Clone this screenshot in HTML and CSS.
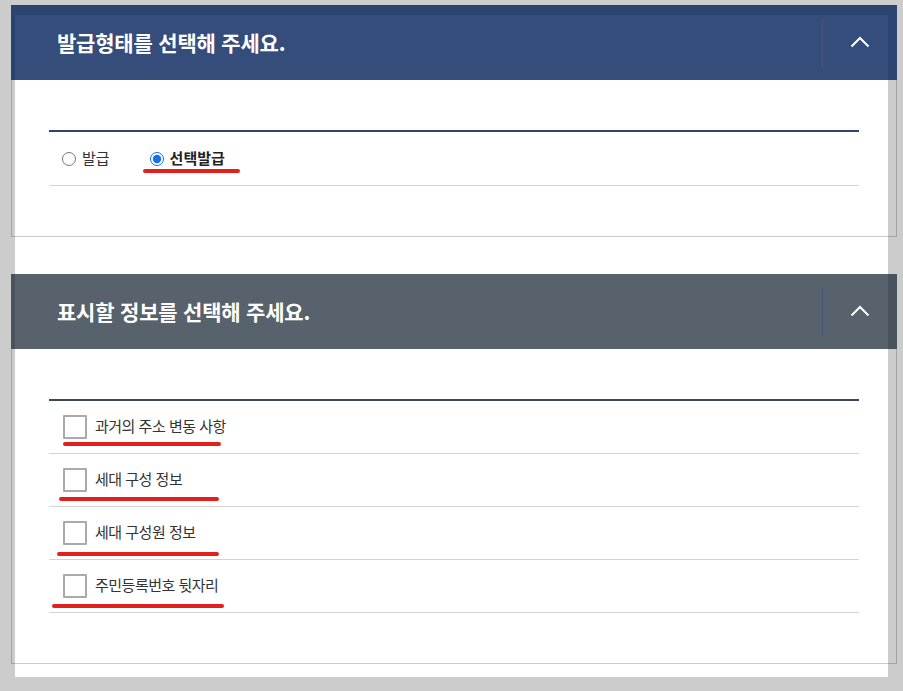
FILE: index.html
```html
<!DOCTYPE html>
<html lang="ko">
<head>
  <meta charset="UTF-8" />
  <meta name="viewport" content="width=device-width, initial-scale=1.0"/>
  <title>발급형태 선택</title>
  <link rel="stylesheet" href="styles.css">
</head>
<body>

<div class="page">

  <section class="box">
    <div class="box-head">
      <h2>발급형태를 선택해 주세요.</h2>
      <button class="toggle" type="button" aria-label="접기">
        <svg width="20" height="13" viewBox="0 0 20 13"><polyline points="1.5,11.5 10,3 18.5,11.5" fill="none" stroke="#fff" stroke-width="2"/></svg>
      </button>
    </div>
    <div class="box-body">
      <div class="list">
        <div class="row radios">
          <label class="opt"><input type="radio" name="kind"> <span class="txt">발급</span></label>
          <label class="opt strong"><input type="radio" name="kind" checked> <span class="txt">선택발급</span></label>
          <span class="mark mark-r"></span>
        </div>
      </div>
    </div>
  </section>

  <section class="box box-alt">
    <div class="box-head">
      <h2>표시할 정보를 선택해 주세요.</h2>
      <button class="toggle" type="button" aria-label="접기">
        <svg width="20" height="13" viewBox="0 0 20 13"><polyline points="1.5,11.5 10,3 18.5,11.5" fill="none" stroke="#fff" stroke-width="2"/></svg>
      </button>
    </div>
    <div class="box-body">
      <div class="list">
        <div class="row">
          <label class="chk"><input type="checkbox"> <span class="txt">과거의 주소 변동 사항</span></label>
          <span class="mark mark-1"></span>
        </div>
        <div class="row">
          <label class="chk"><input type="checkbox"> <span class="txt">세대 구성 정보</span></label>
          <span class="mark mark-2"></span>
        </div>
        <div class="row">
          <label class="chk"><input type="checkbox"> <span class="txt">세대 구성원 정보</span></label>
          <span class="mark mark-3"></span>
        </div>
        <div class="row">
          <label class="chk"><input type="checkbox"> <span class="txt">주민등록번호 뒷자리</span></label>
          <span class="mark mark-4"></span>
        </div>
      </div>
    </div>
  </section>

</div>

</body>
</html>
```

FILE: styles.css
```css
body { margin: 0; background: #cccccc; font-family: "Noto Sans CJK KR", "Noto Sans", sans-serif; color: #333; }

.page { display: flow-root; width: 873px; margin: 15px 0 0 15px; padding-bottom: 13px; background: #fff; }

.box { margin: 37px -9px 0 -4px; }
.box:first-child { margin-top: -10px; }

.box-head { display: flex; align-items: center; height: 75px; background: rgba(1, 33, 89, 0.8); }
.box-alt .box-head { background: rgba(18, 34, 48, 0.71); }
.box-head h2 { flex: 1; margin: 0 0 2px; padding-left: 46px; color: #fff; font-size: 21px; font-weight: 700; letter-spacing: -0.2px; }

.toggle { display: flex; align-items: center; justify-content: center; width: 75px; height: 50px; padding: 0 0 3px; border: none; border-left: 1px solid #44587e; background: none; cursor: pointer; }

.box-body { padding: 50px 37px; border: 1px solid rgba(0, 0, 0, 0.2); border-top: none; }

.list { border-top: 2px solid #2f4470; }
.box-alt .list { border-top-color: #3e4859; }

.row { position: relative; display: flex; align-items: center; height: 52px; padding-left: 14px; border-bottom: 1px solid #d4d4d4; font-size: 15px; }
.radios { height: 53px; padding-left: 13px; gap: 40px; }

.txt { line-height: 1; padding-bottom: 2px; }

.opt { display: inline-flex; align-items: center; gap: 6px; color: #333; }
.opt input { width: 14px; height: 14px; margin: 0; accent-color: #1a6fe6; }
.opt.strong { font-weight: 700; color: #222; }

.chk { display: inline-flex; align-items: center; gap: 8px; letter-spacing: -0.5px; color: #333; }
.chk .txt { padding-bottom: 4px; }
.chk input { appearance: none; width: 24px; height: 24px; margin: 0; border: 2px solid #aaa; border-radius: 1px; background: #fff; }
.chk input:checked { background: #2f4470; border-color: #2f4470; }

/* red annotation strokes */
.mark { position: absolute; height: 4px; border-radius: 2px; background: #e2211f; }
.mark-r { left: 94px; top: 37px; width: 97px; }
.mark-1 { left: 14px; top: 41px; width: 158px; }
.mark-2 { left: 10px; top: 43px; width: 160px; }
.mark-3 { left: 8px; top: 45px; width: 162px; }
.mark-4 { left: 3px; top: 44px; width: 172px; }
```
